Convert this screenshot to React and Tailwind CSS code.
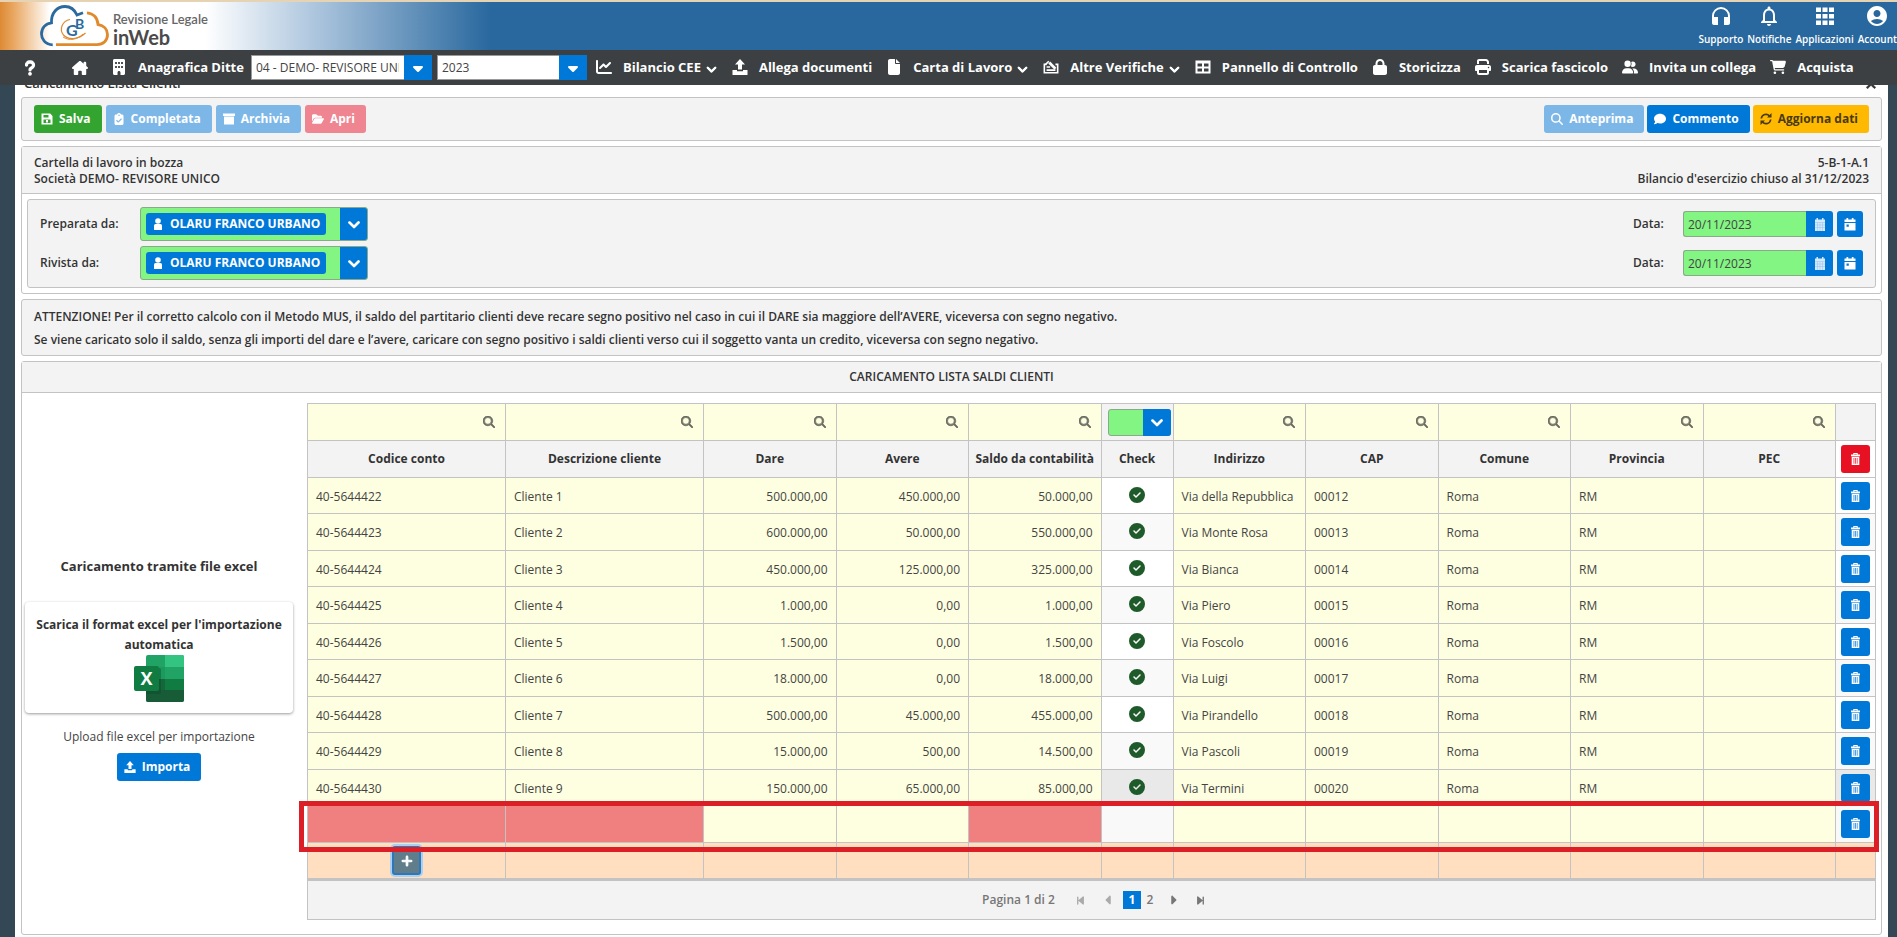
import {
  FaBuilding,
  FaCaretDown,
  FaChartLine,
  FaChevronDown,
  FaCircleCheck,
  FaClipboardCheck,
  FaComment,
  FaFile,
  FaFolderOpen,
  FaHouseChimney,
  FaLock,
  FaMagnifyingGlass,
  FaPlus,
  FaPrint,
  FaQuestion,
  FaCartShopping,
  FaUserGroup,
  FaXmark,
  FaBackwardStep,
  FaForwardStep,
  FaCaretLeft,
  FaCaretRight,
} from "react-icons/fa6";
import { MdAccountCircle, MdHeadphones, MdNotificationsNone } from "react-icons/md";

const rows = [
  ["40-5644422", "Cliente 1", "500.000,00", "450.000,00", "50.000,00", "Via della Repubblica", "00012"],
  ["40-5644423", "Cliente 2", "600.000,00", "50.000,00", "550.000,00", "Via Monte Rosa", "00013"],
  ["40-5644424", "Cliente 3", "450.000,00", "125.000,00", "325.000,00", "Via Bianca", "00014"],
  ["40-5644425", "Cliente 4", "1.000,00", "0,00", "1.000,00", "Via Piero", "00015"],
  ["40-5644426", "Cliente 5", "1.500,00", "0,00", "1.500,00", "Via Foscolo", "00016"],
  ["40-5644427", "Cliente 6", "18.000,00", "0,00", "18.000,00", "Via Luigi", "00017"],
  ["40-5644428", "Cliente 7", "500.000,00", "45.000,00", "455.000,00", "Via Pirandello", "00018"],
  ["40-5644429", "Cliente 8", "15.000,00", "500,00", "14.500,00", "Via Pascoli", "00019"],
  ["40-5644430", "Cliente 9", "150.000,00", "65.000,00", "85.000,00", "Via Termini", "00020"],
];

const columns = [
  "Codice conto",
  "Descrizione cliente",
  "Dare",
  "Avere",
  "Saldo da contabilità",
  "Check",
  "Indirizzo",
  "CAP",
  "Comune",
  "Provincia",
  "PEC",
];

function UploadIcon({ className }) {
  return (
    <svg viewBox="0 0 16 16" fill="currentColor" className={className} aria-hidden="true">
      <path d="M8 0l5 5.500H10v5H6v-5H3z" />
      <path d="M.5 11h4.500v1.200h6V11h4.500v5H.5z" />
    </svg>
  );
}

function DraftIcon({ className }) {
  return (
    <svg viewBox="0 0 18 16" fill="none" stroke="currentColor" strokeWidth="1.800" className={className} aria-hidden="true">
      <path d="M4 5H1.500v9.500h15V5H14" />
      <path d="M4 8h4M4 11.500h10" />
      <path d="M7 3l7 7" strokeWidth="3" />
      <path d="M3 5l3.500-3.500" />
    </svg>
  );
}

function PanelIcon({ className }) {
  return (
    <svg viewBox="0 0 16 16" fill="none" stroke="currentColor" strokeWidth="2" className={className} aria-hidden="true">
      <rect x="1.500" y="2.500" width="13" height="11" />
      <path d="M1 3.500h14M8 3v10M1 8.500h14" />
    </svg>
  );
}

function GridIcon({ className }) {
  return (
    <svg viewBox="0 0 18 18" fill="currentColor" className={className} aria-hidden="true">
      {[0, 6.5, 13].map((y) =>
        [0, 6.5, 13].map((x) => <rect key={`${x}-${y}`} x={x} y={y + 0.5} width="5" height="4.500" />)
      )}
    </svg>
  );
}

function SaveIcon({ className }) {
  return (
    <svg viewBox="0 0 12 12" fill="currentColor" fillRule="evenodd" className={className} aria-hidden="true">
      <path d="M.5.5h8.700L11.500 3v8.500H.5zM2.500 2v2.500h5V2zM2.500 6.500V10h7V6.500zM5 7h2v2.500H5z" />
    </svg>
  );
}

function ArchiveIcon({ className }) {
  return (
    <svg viewBox="0 0 12 12" fill="currentColor" className={className} aria-hidden="true">
      <path d="M0 .5h12v2.500H0zM1 3.500h10v8H1z" />
    </svg>
  );
}

function RefreshIcon({ className }) {
  return (
    <svg viewBox="0 0 12 12" fill="none" stroke="currentColor" strokeWidth="1.600" className={className} aria-hidden="true">
      <path d="M1.300 5.500A4.700 4.700 0 0 1 9.500 3M10.700 6.500A4.700 4.700 0 0 1 2.500 9" />
      <path d="M11.500 0v4.500H7zM.5 12V7.500H5z" fill="currentColor" stroke="none" />
    </svg>
  );
}

function PersonIcon({ className }) {
  return (
    <svg viewBox="0 0 10 12" fill="currentColor" className={className} aria-hidden="true">
      <circle cx="5" cy="3" r="2.800" />
      <path d="M1 12V7.500Q1 6 2.500 6h5Q9 6 9 7.500V12z" />
    </svg>
  );
}

function CalendarIcon({ className }) {
  return (
    <svg viewBox="0 0 12 13" className={className} aria-hidden="true">
      <path d="M1 1.500h1.500V0h1.500v1.500h4V0h1.500v1.500H11V13H1z" fill="#d6eafb" />
      <path d="M1 4.500h10M1 7h10M1 9.500h10M3.500 4.500V13M6 4.500V13M8.500 4.500V13" stroke="#8cc0ec" strokeWidth="0.500" />
    </svg>
  );
}

function TodayIcon({ className }) {
  return (
    <svg viewBox="0 0 12 13" fill="currentColor" fillRule="evenodd" className={className} aria-hidden="true">
      <path d="M.5 1.500H2.500V0h1.700v1.500h3.600V0h1.700v1.500h2V4H.5zM.5 5h11v7.500H.5zM2.500 6.500v2.200h2.300V6.500z" />
    </svg>
  );
}

function TrashIcon({ className }) {
  return (
    <svg viewBox="0 0 11 12" fill="currentColor" fillRule="evenodd" className={className} aria-hidden="true">
      <path d="M3.300 1.500V0h4.400v1.500H10V3.200H1V1.500zM4.300.9v.6h2.400V.9z" />
      <path d="M1.700 3.800h7.600V12H1.700zM3.600 5v5.800h.7V5zM5.200 5v5.800h.7V5zM6.800 5v5.800h.7V5z" />
    </svg>
  );
}

function ExcelLogo({ className }) {
  return (
    <svg viewBox="0 0 52 48" className={className} aria-hidden="true">
      <rect x="13" width="38" height="47" rx="2" fill="#21a366" />
      <path d="M32 0h17q2 0 2 2v10H32z" fill="#33c481" />
      <path d="M13 12h19v12H13z" fill="#1b9a5e" />
      <path d="M13 24h38v12H13z" fill="#107c41" />
      <path d="M13 24h19v12H13z" fill="#15663a" />
      <path d="M13 35h38v10q0 2-2 2H15q-2 0-2-2z" fill="#185c37" />
      <path d="M13 13h13q2 0 2 2v22q0 2-2 2H13z" fill="#0b4527" opacity="0.400" />
      <rect x="1" y="11" width="25" height="25" rx="2" fill="#107c41" />
      <text x="13.500" y="30" textAnchor="middle" fontSize="18" fontWeight="700" fill="#fff" fontFamily="Open Sans, sans-serif">
        X
      </text>
    </svg>
  );
}

function CloudLogo({ className }) {
  return (
    <svg viewBox="0 0 70 42" fill="none" strokeWidth="2.800" className={className} aria-hidden="true">
      <path
        d="M12.700 39.800C5 39.500 1.500 34 1.500 29c0-6 4-10.500 10-11.200C11 8 17 1.500 25 1.500c5.500 0 9.500 3 12 8.500l6-2.200"
        stroke="#2a6a9f"
      />
      <path d="M47 7.800c6.500.5 10.500 5 11 11.700 6 1 9.500 5 9.500 10 0 6-4 10.200-10.500 10.200H16" stroke="#e08a2c" />
      <path d="M30 14.500c-8 1.500-11 10-6.500 15.500 5 5.500 15 4.500 22-2" stroke="#e08a2c" strokeWidth="1.200" />
      <path d="M23 32c6 4 14 3 20-3" stroke="#e08a2c" strokeWidth="1" />
      <text x="26" y="31" fontSize="16" fontWeight="700" fill="#2a6a9f" fontFamily="Lato, sans-serif">
        G
      </text>
      <text x="35" y="24" fontSize="14" fontWeight="700" fill="#2a6a9f" fontFamily="Lato, sans-serif">
        B
      </text>
    </svg>
  );
}

function Header() {
  const links = [
    ["Supporto", MdHeadphones],
    ["Notifiche", MdNotificationsNone],
    ["Applicazioni", GridIcon],
    ["Account", MdAccountCircle],
  ];
  return (
    <header className="flex h-[50px] justify-between overflow-hidden border-t-2 border-[#e6d3b4] bg-[linear-gradient(90deg,#dd8a35_0px,#e9a862_14px,#fff_50px,#fff_205px,#a9c3dc_320px,#29689e_490px)]">
      <div className="flex items-center pl-10">
        <CloudLogo className="h-[42px] w-[70px]" />
        <div className="pt-[6px] pl-[3px] font-[Lato,sans-serif]">
          <p className="text-[13px] leading-4 text-[#666]">Revisione Legale</p>
          <p className="text-xl leading-5 font-bold text-[#4a4a4a]">inWeb</p>
        </div>
      </div>
      <div className="flex gap-1 pt-[3px] text-white">
        {links.map(([label, Icon]) => (
          <a key={label} href="#" className="flex flex-col items-center gap-1 text-[10px] leading-4 font-semibold">
            <span className="flex h-[22px] items-center">
              <Icon className={label === "Applicazioni" ? "size-[18px]" : "size-6"} />
            </span>
            {label}
          </a>
        ))}
      </div>
    </header>
  );
}

function NavSelect({ label, value, className }) {
  return (
    <div className={`relative h-[25px] shrink-0 ${className}`}>
      <select aria-label={label} className="h-full w-full appearance-none border border-[#999] bg-white pr-8 pl-1 text-xs font-normal text-[#444]">
        <option>{value}</option>
      </select>
      <span className="pointer-events-none absolute inset-y-0 right-0 flex w-7 items-center justify-center bg-[#0078d7] text-white">
        <FaCaretDown className="size-4" />
      </span>
    </div>
  );
}

function NavItem({ icon: Icon, label, menu }) {
  return (
    <a href="#" className="flex shrink-0 items-center gap-[9px] whitespace-nowrap">
      <span className="flex w-5 justify-center">
        <Icon className="size-4" />
      </span>
      <span className="flex items-center gap-1">
        {label}
        {menu && <FaChevronDown className="mt-[3px] w-[13px] stroke-[60] text-[10px]" />}
      </span>
    </a>
  );
}

function Nav() {
  return (
    <nav className="relative z-10 flex h-[35px] items-center overflow-hidden bg-[#3c4043] pl-5 text-[13px] font-bold text-white">
      <a href="#" aria-label="Aiuto" className="mr-[30px] flex w-5 justify-center">
        <FaQuestion className="size-4 stroke-[40]" />
      </a>
      <a href="#" aria-label="Home" className="mr-[19px] flex w-5 justify-center">
        <FaHouseChimney className="size-4" />
      </a>
      <NavItem icon={FaBuilding} label="Anagrafica Ditte" />
      <NavSelect label="Ditta" value="04 - DEMO- REVISORE UNICO" className="ml-[7px] w-[181px]" />
      <NavSelect label="Anno" value="2023" className="mr-[7px] ml-[5px] w-[150px]" />
      <div className="flex gap-3">
        <NavItem icon={FaChartLine} label="Bilancio CEE" menu />
        <NavItem icon={UploadIcon} label="Allega documenti" />
        <NavItem icon={FaFile} label="Carta di Lavoro" menu />
        <NavItem icon={DraftIcon} label="Altre Verifiche" menu />
        <NavItem icon={PanelIcon} label="Pannello di Controllo" />
        <NavItem icon={FaLock} label="Storicizza" />
        <NavItem icon={FaPrint} label="Scarica fascicolo" />
        <NavItem icon={FaUserGroup} label="Invita un collega" />
        <NavItem icon={FaCartShopping} label="Acquista" />
      </div>
    </nav>
  );
}

function ToolButton({ icon: Icon, className, children }) {
  return (
    <button type="button" className={`flex h-7 items-center gap-[5px] rounded-[3px] pr-[11px] pl-[6px] text-xs font-bold ${className}`}>
      <span className="flex w-[14px] justify-center">
        <Icon className="size-3" />
      </span>
      {children}
    </button>
  );
}

function UserField({ id, label }) {
  return (
    <div className="flex h-[34px] items-center">
      <label htmlFor={id} className="w-[100px]">
        {label}
      </label>
      <div className="flex h-full w-[228px] items-center rounded-[3px] border border-[#8aa88a] bg-[#82f582]">
        <span className="ml-[5px] flex h-[22px] w-[180px] items-center gap-[7px] rounded-[3px] bg-[#0078d7] pl-[7px] font-bold text-white">
          <PersonIcon className="h-3 w-[10px]" />
          OLARU FRANCO URBANO
        </span>
        <button id={id} type="button" className="ml-auto flex h-full w-[27px] items-center justify-center rounded-r-[2px] bg-[#0078d7] text-white">
          <FaChevronDown className="size-3 stroke-[50]" />
        </button>
      </div>
    </div>
  );
}

function DateField({ id }) {
  return (
    <div className="flex h-[34px] items-center">
      <label htmlFor={id} className="w-[50px]">
        Data:
      </label>
      <input
        id={id}
        type="text"
        defaultValue="20/11/2023"
        className="h-[26px] w-[123px] rounded-l-[3px] border border-r-0 border-[#8aa88a] bg-[#82f582] px-1 text-xs font-normal text-[#444]"
      />
      <button type="button" aria-label="Apri calendario" className="flex h-[26px] w-[27px] items-center justify-center rounded-r-[3px] bg-[#0078d7]">
        <CalendarIcon className="h-[13px] w-3" />
      </button>
      <button type="button" aria-label="Oggi" className="ml-1 flex h-[26px] w-[26px] items-center justify-center rounded-[3px] bg-[#0078d7] text-white">
        <TodayIcon className="h-[13px] w-3" />
      </button>
    </div>
  );
}

function DeleteButton({ label, className }) {
  return (
    <button type="button" aria-label={label} className={`mx-auto flex h-7 w-[29px] items-center justify-center rounded-[3px] text-white ${className}`}>
      <TrashIcon className="h-3 w-[11px]" />
    </button>
  );
}

function FilterCell({ column }) {
  if (column === "Check") {
    return (
      <td className="border border-[#c3c3c3] bg-[#f3f3f3] p-0">
        <div className="relative mr-[2px] ml-auto h-[27px] w-[63px]">
          <select aria-label="Filtra Check" className="h-full w-full appearance-none rounded-[3px] border border-[#8aa88a] bg-[#82f582]">
            <option></option>
          </select>
          <span className="pointer-events-none absolute inset-y-0 right-0 flex w-7 items-center justify-center rounded-r-[3px] bg-[#0078d7] text-white">
            <FaChevronDown className="size-3 stroke-[50]" />
          </span>
        </div>
      </td>
    );
  }
  return (
    <td className="border border-[#c3c3c3] bg-[#feffe0] p-0">
      <div className="flex items-center pr-[10px]">
        <input type="text" aria-label={`Filtra ${column}`} className="h-6 min-w-0 flex-1 bg-transparent px-2" />
        <FaMagnifyingGlass className="size-3 stroke-[30] text-[#6b6b62]" />
      </div>
    </td>
  );
}

function BalanceTable() {
  const cell = "border border-[#c3c3c3] bg-[#feffe0] px-2 pt-[2px] pb-0 whitespace-nowrap";
  return (
    <table className="w-full table-fixed border-collapse text-xs font-normal text-[#444]">
      <colgroup>
        <col className="w-[198px]" />
        <col className="w-[198px]" />
        <col span={3} />
        <col className="w-[72px]" />
        <col span={5} />
        <col className="w-10" />
      </colgroup>
      <thead>
        <tr className="h-[37px]">
          {columns.map((column) => (
            <FilterCell key={column} column={column} />
          ))}
          <td className="border border-[#c3c3c3] bg-[#f3f3f3]"></td>
        </tr>
        <tr className="h-[37px]">
          {columns.map((column) => (
            <th key={column} scope="col" className="border border-[#c3c3c3] bg-[#f3f3f3] p-0 font-bold whitespace-nowrap text-[#333]">
              {column}
            </th>
          ))}
          <th className="border border-[#c3c3c3] bg-white p-0">
            <DeleteButton label="Elimina tutto" className="bg-[#e81123]" />
          </th>
        </tr>
      </thead>
      <tbody>
        {rows.map(([code, name, debit, credit, balance, address, zip], i) => (
          <tr key={code} className={`odd:h-9 even:h-[37px] ${i === 8 ? "bg-[#e9e9e9]" : "odd:bg-white even:bg-[#f9f9f9]"}`}>
            <td className={cell}>{code}</td>
            <td className={cell}>{name}</td>
            <td className={`${cell} text-right`}>{debit}</td>
            <td className={`${cell} text-right`}>{credit}</td>
            <td className={`${cell} text-right`}>{balance}</td>
            <td className="border border-[#c3c3c3] px-0 pt-0 pb-[2px]">
              <FaCircleCheck className="mx-auto size-4 text-[#1f5a2b]" />
            </td>
            <td className={cell}>{address}</td>
            <td className={cell}>{zip}</td>
            <td className={cell}>Roma</td>
            <td className={cell}>RM</td>
            <td className={cell}></td>
            <td className="border border-[#c3c3c3] p-0">
              <DeleteButton label={`Elimina ${name}`} className="bg-[#0078d7]" />
            </td>
          </tr>
        ))}
        <tr className="h-[37px] bg-[#f9f9f9]">
          <td className="border border-[#c3c3c3] bg-[#f08080]"></td>
          <td className="border border-[#c3c3c3] bg-[#f08080]"></td>
          <td className={cell}></td>
          <td className={cell}></td>
          <td className="border border-[#c3c3c3] bg-[#f08080]"></td>
          <td className="border border-[#c3c3c3]"></td>
          <td className={cell}></td>
          <td className={cell}></td>
          <td className={cell}></td>
          <td className={cell}></td>
          <td className={cell}></td>
          <td className="border border-[#c3c3c3] p-0">
            <DeleteButton label="Elimina riga vuota" className="bg-[#0078d7]" />
          </td>
        </tr>
      </tbody>
      <tfoot>
        <tr className="h-9 bg-[#ffdfc0]">
          <td className="border border-[#c3c3c3] p-0">
            <button
              type="button"
              aria-label="Aggiungi riga"
              className="mx-auto flex h-[29px] w-[29px] items-center justify-center rounded-[3px] border-2 border-[#2f78b5] bg-[#607d8b] text-white shadow-[0_0_0_2px_#a6d1f5]"
            >
              <FaPlus className="size-3 stroke-[50]" />
            </button>
          </td>
          {columns.map((column) => (
            <td key={column} className="border border-[#c3c3c3]"></td>
          ))}
        </tr>
      </tfoot>
    </table>
  );
}

function Pager() {
  return (
    <div className="flex h-[41px] items-center justify-center border border-t-2 border-[#c3c3c3] bg-[#f3f3f3] pl-[14px] text-xs font-semibold text-[#777]">
      <span className="mr-3">Pagina 1 di 2</span>
      <button type="button" aria-label="Prima pagina" disabled className="flex w-7 justify-center text-[#aaa]">
        <FaBackwardStep className="size-[11px]" />
      </button>
      <button type="button" aria-label="Pagina precedente" disabled className="flex w-7 justify-center text-[#aaa]">
        <FaCaretLeft className="size-[14px]" />
      </button>
      <button type="button" className="h-[18px] w-[18px] bg-[#0078d7] font-bold text-white">
        1
      </button>
      <button type="button" className="w-[18px]">
        2
      </button>
      <button type="button" aria-label="Pagina successiva" className="flex w-7 justify-center">
        <FaCaretRight className="size-[14px]" />
      </button>
      <button type="button" aria-label="Ultima pagina" className="flex w-7 justify-center">
        <FaForwardStep className="size-[11px]" />
      </button>
    </div>
  );
}

function ImportPanel() {
  return (
    <aside className="flex w-[285px] shrink-0 flex-col items-center justify-center pt-[10px] pr-[14px] pl-[3px] text-center">
      <h2 className="mb-[26px] text-[13px] leading-5 font-bold">Caricamento tramite file excel</h2>
      <a href="#" className="mb-[14px] flex w-full flex-col items-center rounded-[4px] px-1 pt-[13px] pb-[10px] text-xs leading-5 font-bold shadow-[0_1px_3px_rgba(0,0,0,0.4)]">
        Scarica il format excel per l'importazione automatica
        <ExcelLogo className="h-12 w-[52px]" />
      </a>
      <p className="mb-[6px] text-xs leading-5 font-normal text-[#444]">Upload file excel per importazione</p>
      <ToolButton icon={UploadIcon} className="bg-[#0078d7] text-white">
        Importa
      </ToolButton>
    </aside>
  );
}

export default function App() {
  return (
    <div className="flex min-h-screen flex-col bg-[#334754] font-['Open_Sans',sans-serif] text-xs font-semibold text-[#333]">
      <Header />
      <Nav />
      <div className="-mt-[13px] flex flex-1 pr-[9px] pl-[15px]">
        <main className="flex min-w-0 flex-1 flex-col gap-[5px] bg-white px-[6px]">
          <div className="-mb-1 flex h-6 items-center justify-between pr-[4px] pl-[3px] text-[13px]">
            <h1 className="font-semibold">Caricamento Lista Clienti</h1>
            <button type="button" aria-label="Chiudi">
              <FaXmark className="size-[14px] stroke-[30]" />
            </button>
          </div>

          <div className="flex h-[44px] items-center justify-between rounded-[3px] border border-[#c3c3c3] bg-[#f3f3f3] px-3">
            <div className="flex gap-1 text-white">
              <ToolButton icon={SaveIcon} className="bg-[#34a430]">Salva</ToolButton>
              <ToolButton icon={FaClipboardCheck} className="bg-[#7db7e8]">Completata</ToolButton>
              <ToolButton icon={ArchiveIcon} className="bg-[#7db7e8]">Archivia</ToolButton>
              <ToolButton icon={FaFolderOpen} className="bg-[#ee8590]">Apri</ToolButton>
            </div>
            <div className="flex gap-[3px] text-white">
              <ToolButton icon={FaMagnifyingGlass} className="bg-[#7db7e8]">Anteprima</ToolButton>
              <ToolButton icon={FaComment} className="bg-[#0078d7]">Commento</ToolButton>
              <ToolButton icon={RefreshIcon} className="bg-[#ffb900] text-[#4a3a10]">Aggiorna dati</ToolButton>
            </div>
          </div>

          <section className="rounded-[3px] border border-[#c3c3c3]">
            <div className="flex justify-between border-b border-[#c3c3c3] bg-[#f3f3f3] px-3 pt-2 pb-[6px] leading-4">
              <p>
                Cartella di lavoro in bozza
                <br />
                Società DEMO- REVISORE UNICO
              </p>
              <p className="text-right">
                5-B-1-A.1
                <br />
                Bilancio d'esercizio chiuso al 31/12/2023
              </p>
            </div>
            <div className="m-[5px] flex justify-between rounded-[3px] border border-[#c3c3c3] bg-[#f3f3f3] px-3 py-[7px]">
              <div className="flex flex-col gap-[5px]">
                <UserField id="preparata" label="Preparata da:" />
                <UserField id="rivista" label="Rivista da:" />
              </div>
              <div className="flex flex-col gap-[5px]">
                <DateField id="data-preparata" />
                <DateField id="data-rivista" />
              </div>
            </div>
          </section>

          <section className="flex flex-col gap-[5px] rounded-[3px] border border-[#c3c3c3] bg-[#f3f3f3] px-3 pt-2 pb-[6px] leading-[18px]">
            <p>
              ATTENZIONE! Per il corretto calcolo con il Metodo MUS, il saldo del partitario clienti deve recare segno
              positivo nel caso in cui il DARE sia maggiore dell’AVERE, viceversa con segno negativo.
            </p>
            <p>
              Se viene caricato solo il saldo, senza gli importi del dare e l’avere, caricare con segno positivo i saldi
              clienti verso cui il soggetto vanta un credito, viceversa con segno negativo.
            </p>
          </section>

          <section className="rounded-[3px] border border-[#c3c3c3]">
            <h2 className="border-b border-[#c3c3c3] bg-[#f3f3f3] text-center text-xs leading-[30px] font-semibold">
              CARICAMENTO LISTA SALDI CLIENTI
            </h2>
            <div className="flex">
              <ImportPanel />
              <div className="relative min-w-0 flex-1 pt-[10px] pr-[5px] pb-[14px]">
                <BalanceTable />
                <Pager />
                {/* Frame around the incomplete row */}
                <div className="pointer-events-none absolute top-[408px] right-[2px] -left-2 h-[51px] border-[5px] border-[#dc1f26]"></div>
              </div>
            </div>
          </section>
        </main>
      </div>
    </div>
  );
}
